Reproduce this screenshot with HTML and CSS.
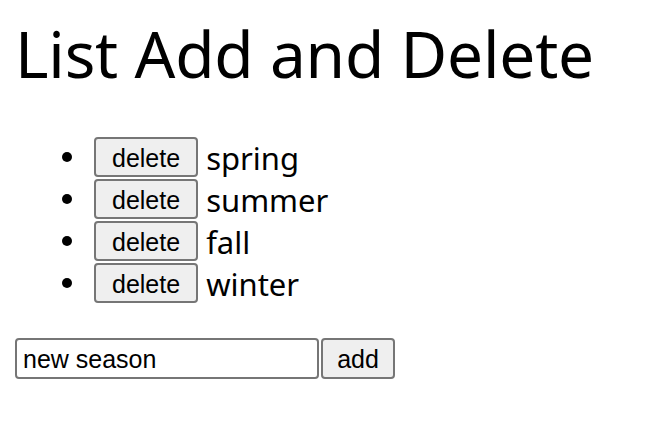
FILE: index.html
```html
<!DOCTYPE html>
<html lang="en">
<head>
<meta charset="utf-8">
<title>List Add and Delete</title>
<link rel="stylesheet" href="styles.css">
</head>
<body>
<h1 class="title">List Add and Delete</h1>
<ul class="seasons">
  <li class="season"><button class="btn">delete</button><span class="label">spring</span></li>
  <li class="season"><button class="btn">delete</button><span class="label">summer</span></li>
  <li class="season"><button class="btn">delete</button><span class="label">fall</span></li>
  <li class="season"><button class="btn">delete</button><span class="label">winter</span></li>
</ul>
<form class="add-form">
  <input class="field" type="text" value="new season"><button class="btn btn-add" type="button">add</button>
</form>
</body>
</html>
```
FILE: styles.css
```css
html, body {
  margin: 0;
  background: #fff;
}
body {
  padding: 0 15px;
  font-family: "Noto Sans", sans-serif;
  color: #000;
}
.title {
  margin: 0;
  padding-top: 14px;
  font-size: 64px;
  font-weight: 400;
  line-height: 80px;
  letter-spacing: -0.2px;
}
.seasons {
  list-style: none;
  margin: 43px 0 0;
  padding: 0 0 0 47px;
  font-size: 31px;
  display: flex;
  flex-direction: column;
  gap: 2px;
}
.season {
  display: flex;
  align-items: center;
  height: 40px;
}
.season::before {
  content: "";
  width: 10px;
  height: 10px;
  border-radius: 50%;
  background: #000;
  margin-right: 22px;
  flex: none;
}
.label {
  margin-left: 8px;
  line-height: 40px;
  padding-top: 2px;
}
.btn {
  font-family: "Liberation Sans", Arial, sans-serif;
  font-size: 25px;
  height: 40px;
  padding: 2px 16px 0;
  background: #efefef;
  border: 2px solid #767676;
  border-radius: 4px;
  color: #000;
  margin: 0;
}
.add-form {
  display: flex;
  margin-top: 35px;
}
.field {
  box-sizing: border-box;
  width: 304px;
  height: 41px;
  border: 2px solid #767676;
  border-radius: 4px;
  font-family: "Liberation Sans", Arial, sans-serif;
  font-size: 25px;
  padding: 2px 6px 0;
  margin: 0 2px 0 0;
  color: #000;
}
.btn-add {
  height: 41px;
  width: 74px;
  padding: 2px 0 0;
}
```
